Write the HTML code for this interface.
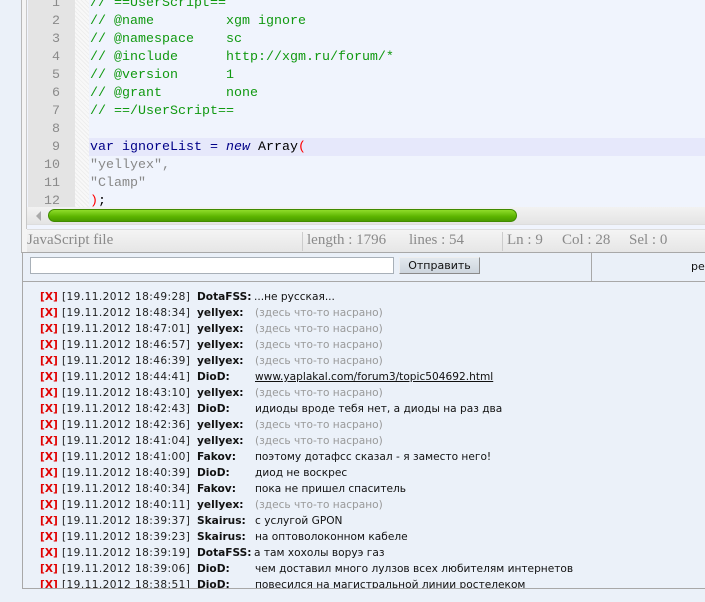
<!DOCTYPE html>
<html><head><meta charset="utf-8"><style>
*{margin:0;padding:0;box-sizing:border-box}
body{width:705px;height:602px;background:#ebf1f9;position:relative;overflow:hidden;font-family:"DejaVu Sans","Liberation Sans",sans-serif}
.a{position:absolute}
#ed{left:21px;top:0;width:690px;height:253px;border-left:1px solid #b8b8b8;border-bottom:1px solid #a8a8a8;background:#f4f4f4}
#in{left:26px;top:0;width:690px;height:229px;border-left:1px solid #c8c8c8;background:#f0f4fd}
#gut{left:28px;top:0;width:47px;height:207px;background:#e4e4e4}
#str{left:75px;top:0;width:14px;height:207px;background:repeating-linear-gradient(45deg,#eeeeee 0 1px,#f8f8f8 1px 3px)}
#hl{left:89px;top:138px;width:620px;height:18px;background:#e6e8fb}
.ln{position:absolute;left:28px;width:32px;text-align:right;font:13.33px "Liberation Mono",monospace;color:#8a8a8a;line-height:18px}
.cd{position:absolute;left:90px;font:13.33px "Liberation Mono",monospace;line-height:18px;white-space:pre}
.cm{color:#119911}.str{color:#888}.kw{color:#000088}.pn{color:#ff0000}
#sb{left:27px;top:207px;width:690px;height:18px;background:linear-gradient(#f2f2f2,#e4e4e4);border-bottom:1px solid #ddd}
#th{left:48px;top:209px;width:469px;height:13px;border-radius:7px;background:linear-gradient(#8fdc2a,#5cb400 60%,#4a9c00);border:1px solid #3f8a00}
#st{left:27px;top:229px;width:690px;height:23px;background:linear-gradient(#f4f4f4,#e6e6e6);border-top:1px solid #ddd;font:15px "Liberation Serif",serif;color:#8a8a8a}
#st span{position:absolute;top:2px;white-space:pre}
.sep{position:absolute;top:2px;width:1px;height:19px;background:#ccc}
#row{left:22px;top:253px;width:690px;height:29px;border-left:1px solid #a8a8a8;border-bottom:1px solid #a8a8a8;background:#eaf0f8}
#inp{left:30px;top:257px;width:364px;height:17px;background:#fff;border:1px solid #a8b0b8}
#btn{left:399px;top:257px;width:81px;height:17px;background:linear-gradient(#e2e8ee,#cdd5dd);border:1px solid #8a8a8a;border-top-color:#eee;border-left-color:#eee;font-size:11px;color:#111;text-align:center;line-height:15px}
#chat{left:22px;top:282px;width:690px;height:307px;border-left:1px solid #a8a8a8;border-bottom:1px solid #a8a8a8}
.r{position:absolute;left:0;width:705px;height:16px;font-size:10.6px;line-height:16px;white-space:nowrap}
.r b.x{position:absolute;left:40px;color:#e00000}
.r .t{position:absolute;left:62px;color:#222;letter-spacing:.4px}
.r .n{position:absolute;left:197px;color:#111;font-weight:bold}
.r .m{position:absolute;left:255px;color:#111}
.r .g{color:#999}
.r a{color:#111;text-decoration:underline}
</style></head><body>
<div id="ed" class="a"></div>
<div id="in" class="a"></div>
<div id="gut" class="a"></div>
<div id="str" class="a"></div>
<div id="hl" class="a"></div>
<div class="ln" style="top:-5px">1</div><div class="ln" style="top:13px">2</div><div class="ln" style="top:31px">3</div><div class="ln" style="top:49px">4</div><div class="ln" style="top:67px">5</div><div class="ln" style="top:85px">6</div><div class="ln" style="top:103px">7</div><div class="ln" style="top:121px">8</div><div class="ln" style="top:139px">9</div><div class="ln" style="top:157px">10</div><div class="ln" style="top:175px">11</div><div class="ln" style="top:193px">12</div>
<div class="cd cm" style="top:-5px">// ==UserScript==</div>
<div class="cd cm" style="top:13px">// @name         xgm ignore</div>
<div class="cd cm" style="top:31px">// @namespace    sc</div>
<div class="cd cm" style="top:49px">// @include      http://xgm.ru/forum/*</div>
<div class="cd cm" style="top:67px">// @version      1</div>
<div class="cd cm" style="top:85px">// @grant        none</div>
<div class="cd cm" style="top:103px">// ==/UserScript==</div>
<div class="cd kw" style="top:139px">var ignoreList = <i>new</i> <span style="color:#000">Array</span><span class="pn">(</span></div>
<div class="cd str" style="top:157px">"yellyex",</div>
<div class="cd str" style="top:175px">"Clamp"</div>
<div class="cd" style="top:193px;height:14px;overflow:hidden"><span class="pn">)</span>;</div>
<div id="sb" class="a"></div>
<div class="a" style="left:36px;top:211px;width:0;height:0;border-top:5px solid transparent;border-bottom:5px solid transparent;border-right:5px solid #aaa"></div>
<div id="th" class="a"></div>
<div id="st" class="a"><span style="left:0">JavaScript file</span><div class="sep" style="left:275px"></div><span style="left:280px">length : 1796</span><span style="left:382px">lines : 54</span><div class="sep" style="left:475px"></div><span style="left:480px">Ln : 9</span><span style="left:535px">Col : 28</span><span style="left:602px">Sel : 0</span></div>
<div id="row" class="a"><div class="a" style="left:568px;top:0;width:1px;height:28px;background:#a8a8a8"></div><div class="a" style="left:668px;top:7px;font-size:11px;color:#111">ре</div></div>
<div id="inp" class="a"></div>
<div id="btn" class="a">Отправить</div>
<div class="a" style="left:0;top:289px;width:705px;height:299px;overflow:hidden">
<div class="r" style="top:0"><b class="x">[X]</b><span class="t">[19.11.2012 18:49:28]</span><b class="n">DotaFSS:</b><span class="m" style="left:254px">...не русская...</span></div>
<div class="r" style="top:16px"><b class="x">[X]</b><span class="t">[19.11.2012 18:48:34]</span><b class="n">yellyex:</b><span class="m g">(здесь что-то насрано)</span></div>
<div class="r" style="top:32px"><b class="x">[X]</b><span class="t">[19.11.2012 18:47:01]</span><b class="n">yellyex:</b><span class="m g">(здесь что-то насрано)</span></div>
<div class="r" style="top:48px"><b class="x">[X]</b><span class="t">[19.11.2012 18:46:57]</span><b class="n">yellyex:</b><span class="m g">(здесь что-то насрано)</span></div>
<div class="r" style="top:64px"><b class="x">[X]</b><span class="t">[19.11.2012 18:46:39]</span><b class="n">yellyex:</b><span class="m g">(здесь что-то насрано)</span></div>
<div class="r" style="top:80px"><b class="x">[X]</b><span class="t">[19.11.2012 18:44:41]</span><b class="n">DioD:</b><span class="m"><a>www.yaplakal.com/forum3/topic504692.html</a></span></div>
<div class="r" style="top:96px"><b class="x">[X]</b><span class="t">[19.11.2012 18:43:10]</span><b class="n">yellyex:</b><span class="m g">(здесь что-то насрано)</span></div>
<div class="r" style="top:112px"><b class="x">[X]</b><span class="t">[19.11.2012 18:42:43]</span><b class="n">DioD:</b><span class="m">идиоды вроде тебя нет, а диоды на раз два</span></div>
<div class="r" style="top:128px"><b class="x">[X]</b><span class="t">[19.11.2012 18:42:36]</span><b class="n">yellyex:</b><span class="m g">(здесь что-то насрано)</span></div>
<div class="r" style="top:144px"><b class="x">[X]</b><span class="t">[19.11.2012 18:41:04]</span><b class="n">yellyex:</b><span class="m g">(здесь что-то насрано)</span></div>
<div class="r" style="top:160px"><b class="x">[X]</b><span class="t">[19.11.2012 18:41:00]</span><b class="n">Fakov:</b><span class="m">поэтому дотафсс сказал - я заместо него!</span></div>
<div class="r" style="top:176px"><b class="x">[X]</b><span class="t">[19.11.2012 18:40:39]</span><b class="n">DioD:</b><span class="m">диод не воскрес</span></div>
<div class="r" style="top:192px"><b class="x">[X]</b><span class="t">[19.11.2012 18:40:34]</span><b class="n">Fakov:</b><span class="m">пока не пришел спаситель</span></div>
<div class="r" style="top:208px"><b class="x">[X]</b><span class="t">[19.11.2012 18:40:11]</span><b class="n">yellyex:</b><span class="m g">(здесь что-то насрано)</span></div>
<div class="r" style="top:224px"><b class="x">[X]</b><span class="t">[19.11.2012 18:39:37]</span><b class="n">Skairus:</b><span class="m">с услугой GPON</span></div>
<div class="r" style="top:240px"><b class="x">[X]</b><span class="t">[19.11.2012 18:39:23]</span><b class="n">Skairus:</b><span class="m">на оптоволоконном кабеле</span></div>
<div class="r" style="top:256px"><b class="x">[X]</b><span class="t">[19.11.2012 18:39:19]</span><b class="n">DotaFSS:</b><span class="m" style="left:254px">а там хохолы воруэ газ</span></div>
<div class="r" style="top:272px"><b class="x">[X]</b><span class="t">[19.11.2012 18:39:06]</span><b class="n">DioD:</b><span class="m">чем доставил много лулзов всех любителям интернетов</span></div>
<div class="r" style="top:288px"><b class="x">[X]</b><span class="t">[19.11.2012 18:38:51]</span><b class="n">DioD:</b><span class="m">повесился на магистральной линии ростелеком</span></div>
</div>
<div id="chat" class="a"></div>
</body></html>
